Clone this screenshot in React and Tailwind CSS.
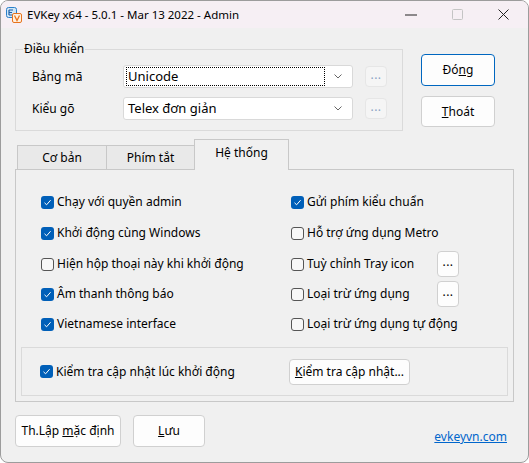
import React from "react";

const font = { fontFamily: '"Noto Sans", "Liberation Sans", sans-serif' };

const Check = ({ on }) =>
  on ? (
    <span className="w-[13px] h-[13px] rounded-[3px] bg-[#005fb8] flex items-center justify-center shrink-0">
      <svg width="9" height="9" viewBox="0 0 9 9">
        <path d="M1.5 4.8 L3.6 6.8 L7.6 2.2" fill="none" stroke="#fff" strokeWidth="1" />
      </svg>
    </span>
  ) : (
    <span className="w-[13px] h-[13px] rounded-[3px] border border-[#555] bg-[#f7f7f7] shrink-0"></span>
  );

const Item = ({ on, label, w }) => (
  <div className={`flex items-center gap-[3px] ${w || ""}`}>
    <Check on={on} />
    <span>{label}</span>
  </div>
);

const Dots = ({ dim }) => (
  <button
    className={`w-[22px] flex items-center justify-center rounded-[4px] border text-[12px] leading-none ${
      dim ? "h-[21px] bg-[#f5f5f5] border-[#e6e6e6] text-[#8aa3c4]" : "h-[26px] bg-[#fdfdfd] border-[#d0d0d0] text-black"
    }`}
  >
    <span className="-mt-[4px] tracking-[0.5px]">...</span>
  </button>
);

const Combo = ({ text, focus }) => (
  <div className="w-[230px] h-[23px] bg-white border border-[#d9d9d9] rounded-[3px] flex items-center pl-[3px] pr-[10px]">
    <div className={`flex-1 h-[17px] flex items-center pl-[1px] ${focus ? "outline outline-1 outline-dotted outline-black" : ""}`}>
      <span className="text-[13px]">{text}</span>
    </div>
    <svg width="8" height="5" viewBox="0 0 8 5" className="ml-[10px]">
      <path d="M0.5 0.5 L4 4 L7.5 0.5" fill="none" stroke="#666" strokeWidth="1" />
    </svg>
  </div>
);

export default function App() {
  return (
    <div style={font} className="w-[529px] h-[463px] bg-[#f0f0f0] border border-[#9c9c9c] rounded-[8px] overflow-hidden flex flex-col text-[12px] text-black">
      {/* title bar */}
      <div className="h-[27px] bg-[#f6eff4] flex items-center shrink-0">
        <svg width="16" height="16" viewBox="0 0 16 16" className="ml-[5px]">
          <rect x="0.5" y="0.5" width="10" height="10" rx="2" fill="#cfe6f7" stroke="#2a7fc9" />
          <path d="M3 3 H7 M3 5.5 H6 M3 8 H7 M3 3 V8" stroke="#1d5fa8" strokeWidth="1.2" fill="none" />
          <rect x="6.5" y="6.5" width="9" height="9" rx="1.5" fill="#fff1df" stroke="#e8731e" />
          <path d="M8.5 8.5 L11 13.5 L13.5 8.5" stroke="#e8731e" strokeWidth="1.3" fill="none" />
        </svg>
        <span className="ml-[5px] text-[11.5px]">EVKey x64 - 5.0.1 - Mar 13 2022 - Admin</span>
        <div className="ml-auto flex items-center">
          <div className="w-[46px] flex justify-center">
            <svg width="12" height="2" viewBox="0 0 12 2"><path d="M0 1 H12" stroke="#222" strokeWidth="1" /></svg>
          </div>
          <div className="w-[46px] flex justify-center">
            <svg width="11" height="11" viewBox="0 0 11 11"><rect x="0.5" y="0.5" width="10" height="10" rx="1" fill="none" stroke="#c4c4c4" /></svg>
          </div>
          <div className="w-[46px] flex justify-center mr-[2px]">
            <svg width="11" height="11" viewBox="0 0 11 11"><path d="M0.5 0.5 L10.5 10.5 M10.5 0.5 L0.5 10.5" stroke="#222" strokeWidth="1" /></svg>
          </div>
        </div>
      </div>

      {/* body */}
      <div className="flex-1 px-[14px] flex flex-col">
        <div className="flex items-start">
          <fieldset className="mt-[13px] w-[388px] border border-[#dadada] pb-[10px]">
            <legend className="ml-[7px] px-[1px] leading-[16px]">Điều khiển</legend>
            <div className="mt-[8px] pl-[16px] flex flex-col gap-[9px]">
              <div className="flex items-center">
                <span className="w-[91px]">Bảng mã</span>
                <Combo text="Unicode" focus />
                <div className="ml-[12px]"><Dots dim /></div>
              </div>
              <div className="flex items-center">
                <span className="w-[91px]">Kiểu gõ</span>
                <Combo text="Telex đơn giản" />
                <div className="ml-[12px]"><Dots dim /></div>
              </div>
            </div>
          </fieldset>
          <div className="ml-[18px] mt-[26px] flex flex-col gap-[10px]">
            <button className="w-[74px] h-[32px] rounded-[4px] bg-[#fdfdfd] border border-[#0067c0]">
              Đó<span className="underline">n</span>g
            </button>
            <button className="w-[74px] h-[31px] rounded-[4px] bg-[#fdfdfd] border border-[#d0d0d0]">
              <span className="underline">T</span>hoát
            </button>
          </div>
        </div>

        {/* tabs */}
        <div className="mt-[8px] flex items-end pl-[2px] h-[30px] relative z-10">
          <div className="w-[90px] h-[24px] bg-[#e9e9e9] border border-[#c8c8c8] border-b-0 flex items-center justify-center">Cơ bản</div>
          <div className="w-[88px] h-[24px] bg-[#e9e9e9] border border-[#c8c8c8] border-l-0 border-b-0 flex items-center justify-center">Phím tắt</div>
          <div className="w-[95px] h-[31px] -mb-[1px] bg-[#f0f0f0] border border-[#c8c8c8] border-b-0 -ml-[1px] flex items-start justify-center pt-[4px]">Hệ thống</div>
        </div>
        <div className="w-[499px] h-[233px] border border-[#c8c8c8] flex flex-col">
          <div className="pt-[23px] pl-[25px] flex">
            <div className="w-[250px] flex flex-col">
              <div className="h-[31px] flex items-start"><Item on label="Chạy với quyền admin" /></div>
              <div className="h-[31px] flex items-start"><Item on label="Khởi động cùng Windows" /></div>
              <div className="h-[30px] flex items-start"><Item label="Hiện hộp thoại này khi khởi động" /></div>
              <div className="h-[30px] flex items-start"><Item on label="Âm thanh thông báo" /></div>
              <div className="h-[30px] flex items-start"><Item on label="Vietnamese interface" /></div>
            </div>
            <div className="flex flex-col">
              <div className="h-[31px] flex items-start"><Item on label="Gửi phím kiểu chuẩn" /></div>
              <div className="h-[31px] flex items-start"><Item label="Hỗ trợ ứng dụng Metro" /></div>
              <div className="h-[30px] flex items-start">
                <Item label="Tuỳ chỉnh Tray icon" w="w-[146px]" />
                <div className="-mt-[4px]"><Dots /></div>
              </div>
              <div className="h-[30px] flex items-start">
                <Item label="Loại trừ ứng dụng" w="w-[146px]" />
                <div className="-mt-[4px]"><Dots /></div>
              </div>
              <div className="h-[30px] flex items-start"><Item label="Loại trừ ứng dụng tự động" /></div>
            </div>
          </div>
          <div className="mt-auto mb-[5px] mx-[5px] h-[49px] border border-[#dadada] flex items-center pl-[18px]">
            <Item on label="Kiểm tra cập nhật lúc khởi động" w="w-[249px]" />
            <button className="w-[121px] h-[26px] rounded-[4px] bg-[#fdfdfd] border border-[#d0d0d0]">
              <span className="underline">K</span>iểm tra cập nhật...
            </button>
          </div>
        </div>

        {/* bottom */}
        <div className="mt-[13px] flex items-center">
          <button className="w-[106px] h-[32px] rounded-[4px] bg-[#fdfdfd] border border-[#d0d0d0]">
            Th.Lập <span className="underline">m</span>ặc định
          </button>
          <button className="ml-[12px] w-[72px] h-[32px] rounded-[4px] bg-[#fdfdfd] border border-[#d0d0d0]">
            <span className="underline">L</span>ưu
          </button>
          <a className="ml-auto mr-[7px] mt-[12px] text-[#0066cc] underline">evkeyvn.com</a>
        </div>
      </div>
    </div>
  );
}
